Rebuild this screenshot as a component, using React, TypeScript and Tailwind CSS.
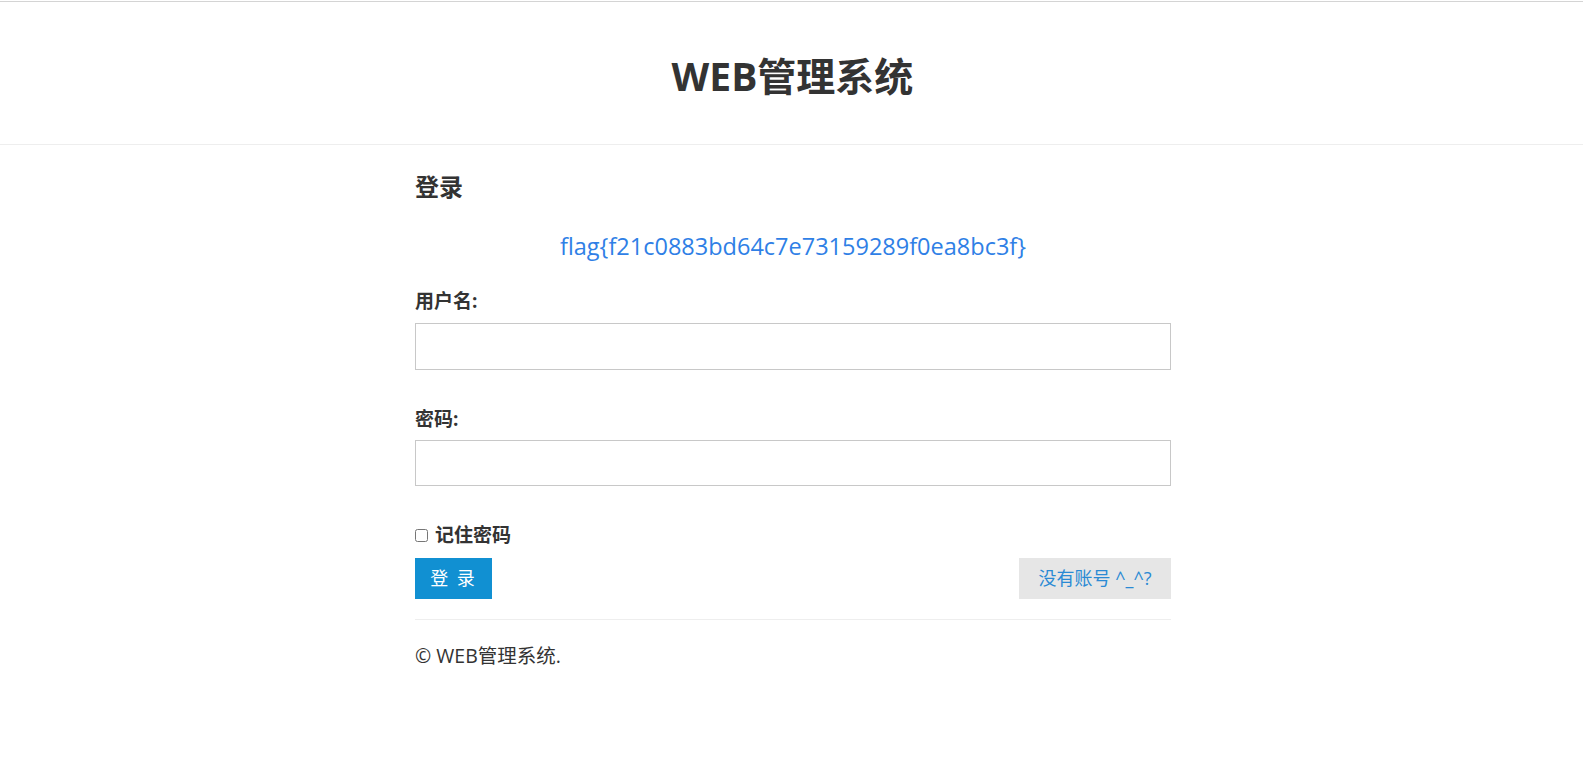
import React from 'react';

const font = { fontFamily: '"Open Sans", "Noto Sans CJK SC", sans-serif' };

export default function App() {
  return (
    <div className="bg-white text-[#333]" style={font}>
      <div className="h-[2px] border-t border-[#d4d4d4] mt-px" />
      {/* header */}
      <div className="border-b border-[#eee] pl-[2px]">
        <h1 className="h-[141px] flex items-center justify-center text-[39px] font-bold pt-[5px]">
          WEB管理系统
        </h1>
      </div>

      <div className="pl-[3px]">
        <div className="w-[756px] mx-auto">
          <h2 className="text-[24px] font-bold mt-[25px] leading-[34px]">登录</h2>

          <p className="text-center text-[23.5px] text-[#2f7fe6] mt-[26px] leading-[32px]">
            flag{'{'}f21c0883bd64c7e73159289f0ea8bc3f{'}'}
          </p>

          <label className="block text-[19px] font-bold mt-[26px] leading-[26px]">用户名:</label>
          <input
            type="text"
            className="block w-full h-[47px] mt-[9px] border border-[#c8c8c8] outline-none px-3"
          />

          <label className="block text-[19px] font-bold mt-[36px] leading-[26px]">密码:</label>
          <input
            type="password"
            className="block w-full h-[46px] mt-[8px] border border-[#c8c8c8] outline-none px-3"
          />

          <label className="flex items-center gap-[7px] mt-[36px] text-[19px] font-bold leading-[26px]">
            <input type="checkbox" className="w-[13px] h-[13px] m-0" />
            记住密码
          </label>

          <div className="flex justify-between mt-[10px]">
            <button className="w-[77px] h-[41px] bg-[#1190d2] text-white text-[18px] tracking-[2px]">
              登 录
            </button>
            <button className="w-[152px] h-[41px] bg-[#e6e6e6] text-[#2a8ad4] text-[18px]">
              没有账号 ^_^?
            </button>
          </div>

          <div className="border-t border-[#eee] mt-[20px]" />

          <p className="text-[19.5px] mt-[22px] leading-[28px]">© WEB管理系统.</p>
        </div>
      </div>
    </div>
  );
}
